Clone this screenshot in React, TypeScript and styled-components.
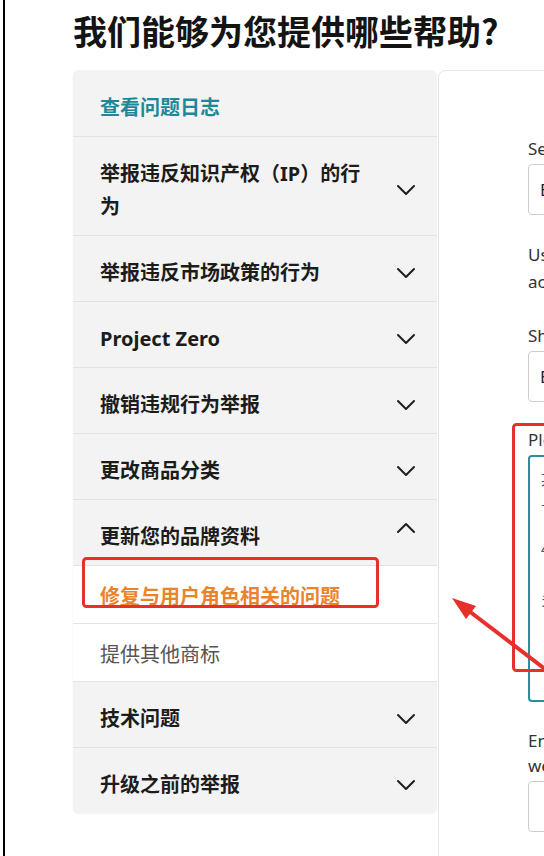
import React from "react";
import styled, { createGlobalStyle } from "styled-components";

const GlobalStyle = createGlobalStyle`
  html, body {
    margin: 0;
    padding: 0;
    background: #ffffff;
    overflow: hidden;
  }
  body {
    font-family: "Noto Sans", "Noto Sans CJK SC", sans-serif;
  }
`;

const Page = styled.div`
  position: relative;
  width: 539px;
  height: 856px;
  margin-left: 3px;
  border-left: 2px solid #000;
  overflow: hidden;
`;

const Title = styled.h1`
  margin: 0;
  padding: 11px 0 0 68px;
  height: 70px;
  box-sizing: border-box;
  font-family: "Noto Sans CJK SC", sans-serif;
  font-size: 34px;
  line-height: 40px;
  font-weight: 700;
  color: #141414;
  white-space: nowrap;
`;

const Columns = styled.div`
  display: flex;
  align-items: flex-start;
  padding-left: 68px;
`;

const Menu = styled.div`
  width: 364px;
  flex-shrink: 0;
  background: #f3f3f3;
  border-radius: 6px;
  box-shadow: 0 1px 2px rgba(0, 0, 0, 0.06);
  overflow: hidden;
`;

const Row = styled.div<{ $head?: boolean }>`
  display: flex;
  align-items: center;
  padding: ${(p) => (p.$head ? "21px 21px 12px 27px" : "20px 21px 12px 27px")};
  border-bottom: 1px solid #e2e2e2;
  &:last-child {
    border-bottom: none;
  }
`;

const RowText = styled.span<{ $teal?: boolean }>`
  flex: 1;
  margin-right: 28px;
  font-family: "Noto Sans", "Noto Sans CJK SC", sans-serif;
  font-size: 20px;
  line-height: 33px;
  font-weight: 700;
  color: ${(p) => (p.$teal ? "#1f8898" : "#1c1c1c")};
`;

const SubRow = styled.div`
  padding: 13px 21px 11px 27px;
  background: #ffffff;
  border-bottom: 1px solid #e4e4e4;
`;

const SubText = styled.span<{ $active?: boolean }>`
  font-family: "Noto Sans CJK SC", sans-serif;
  font-size: 20px;
  line-height: 33px;
  font-weight: ${(p) => (p.$active ? 700 : 400)};
  color: ${(p) => (p.$active ? "#e8852c" : "#555555")};
`;

const Chevron = styled.svg<{ $up?: boolean }>`
  flex-shrink: 0;
  width: 20px;
  height: 12px;
  margin-bottom: ${(p) => (p.$up ? "18px" : "0")};
  fill: none;
  stroke: #1e1e1e;
  stroke-width: 2;
  stroke-linecap: round;
  stroke-linejoin: round;
`;

const FormCard = styled.div`
  flex-shrink: 0;
  width: 420px;
  height: 800px;
  margin-left: 1px;
  padding: 66px 0 0 89px;
  box-sizing: border-box;
  background: #ffffff;
  border: 1px solid #e6e6e6;
  border-radius: 8px 0 0 0;
`;

const Field = styled.div`
  display: flex;
  flex-direction: column;
  margin-bottom: 26px;
`;

const Label = styled.label<{ $lh?: number }>`
  font-size: 17px;
  line-height: ${(p) => p.$lh || 24}px;
  color: #333333;
  margin-bottom: 3px;
`;

const Input = styled.div`
  height: 51px;
  box-sizing: border-box;
  padding: 0 11px;
  display: flex;
  align-items: center;
  border: 1px solid #cdcdcd;
  border-radius: 4px;
  font-size: 17px;
  color: #222;
  white-space: nowrap;
`;

const TextArea = styled.div`
  height: 247px;
  box-sizing: border-box;
  padding: 12px 11px;
  border: 2px solid #2b8e9b;
  border-radius: 4px;
  font-family: "Noto Sans CJK SC", sans-serif;
  font-size: 15px;
  line-height: 20px;
  color: #555;
  p {
    margin: 0 0 30px;
  }
`;

const Overlay = styled.svg`
  position: absolute;
  left: -5px;
  top: 0;
  width: 544px;
  height: 856px;
  pointer-events: none;
`;

const items = [
  "举报违反知识产权（IP）的行为",
  "举报违反市场政策的行为",
  "Project Zero",
  "撤销违规行为举报",
  "更改商品分类",
];

const Down = () => (
  <Chevron viewBox="0 0 20 12">
    <polyline points="2,2 10,10 18,2" />
  </Chevron>
);

export default function App() {
  return (
    <>
      <GlobalStyle />
      <Page>
        <Title>我们能够为您提供哪些帮助?</Title>
        <Columns>
          <Menu>
            <Row $head>
              <RowText $teal>查看问题日志</RowText>
            </Row>
            {items.map((t) => (
              <Row key={t}>
                <RowText>{t}</RowText>
                <Down />
              </Row>
            ))}
            <Row>
              <RowText>更新您的品牌资料</RowText>
              <Chevron $up viewBox="0 0 20 12">
                <polyline points="2,10 10,2 18,10" />
              </Chevron>
            </Row>
            <SubRow>
              <SubText $active>修复与用户角色相关的问题</SubText>
            </SubRow>
            <SubRow>
              <SubText>提供其他商标</SubText>
            </SubRow>
            <Row>
              <RowText>技术问题</RowText>
              <Down />
            </Row>
            <Row>
              <RowText>升级之前的举报</RowText>
              <Down />
            </Row>
          </Menu>
          <FormCard>
            <Field>
              <Label>Select the brand</Label>
              <Input>Brand name</Input>
            </Field>
            <Field>
              <Label $lh={27}>
                Use this form if a user role on your
                <br />
                account has an issue
              </Label>
            </Field>
            <Field>
              <Label>Short description</Label>
              <Input>Brand user role</Input>
            </Field>
            <Field>
              <Label>Please describe the issue</Label>
              <TextArea>
                <p>
                  某用户无法访问品牌
                  <br />
                  上的相关功能
                </p>
                <p>
                  4/28 用户角色
                </p>
                <p>多个账户</p>
              </TextArea>
            </Field>
            <Field>
              <Label $lh={25}>
                Enter the email address
                <br />
                we can use to contact you
              </Label>
              <Input />
            </Field>
          </FormCard>
        </Columns>
        <Overlay viewBox="0 0 544 856">
          <rect x="83.5" y="558.5" width="294" height="48" rx="3" fill="none" stroke="#e8302a" strokeWidth="3" />
          <rect x="513.5" y="424.5" width="60" height="246" rx="3" fill="none" stroke="#e8302a" strokeWidth="3" />
          <line x1="469" y1="611" x2="562" y2="682" stroke="#e8302a" strokeWidth="4" />
          <polygon points="452,598 466,619 476,606" fill="#e8302a" />
        </Overlay>
      </Page>
    </>
  );
}
